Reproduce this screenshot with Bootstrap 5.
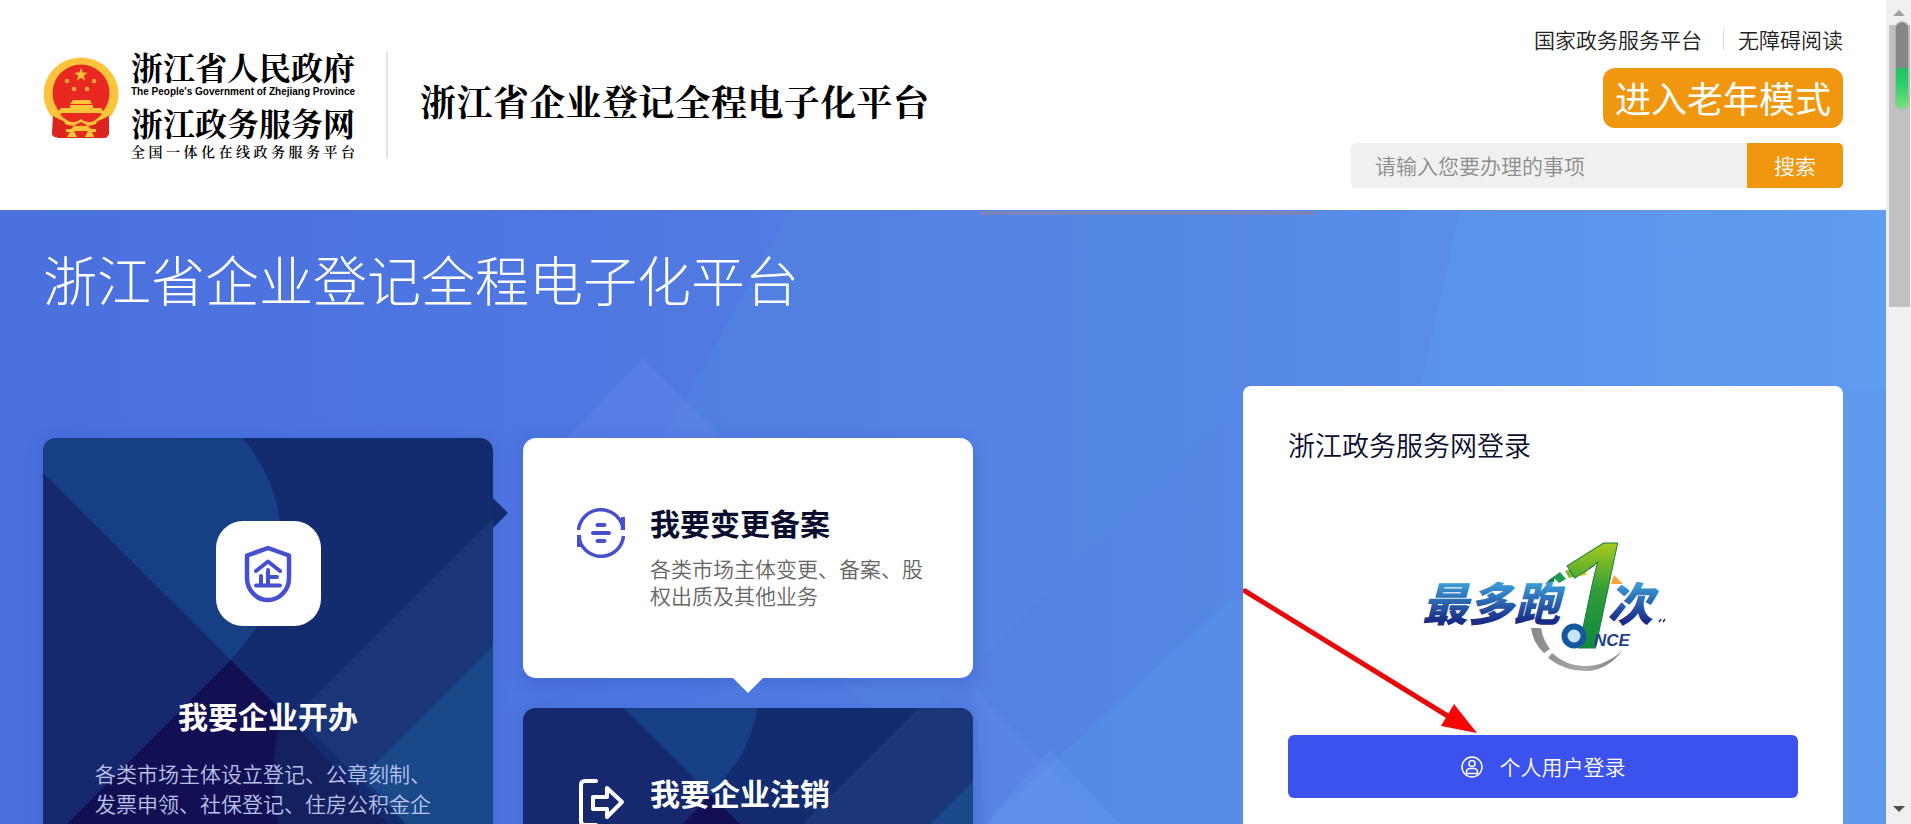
<!DOCTYPE html>
<html lang="zh-CN">
<head>
<meta charset="utf-8">
<meta name="viewport" content="width=device-width, initial-scale=1">
<title>浙江省企业登记全程电子化平台</title>
<link href="https://cdn.jsdelivr.net/npm/bootstrap@5.3.0/dist/css/bootstrap.min.css" rel="stylesheet">
<style>
  :root { --edge: 43px; --orange: #f0970f; --ink: #0a0d2e; }
  body { font-family: "Noto Sans CJK SC", sans-serif; font-weight: 350; font-size: 21px; line-height: 30px; color: #333; }
  .shell { min-width: 0; }

  /* header */
  .site-header { padding: 24px var(--edge) 22px; background: #fff; }
  .brand { padding-bottom: 2px; }
  .brand-words { width: 224px; margin: 0 0 2px 12px; color: #000; font-family: "Noto Serif CJK SC", "Noto Sans CJK SC", serif; font-weight: 700; text-align-last: justify; white-space: nowrap; }
  .brand-big { font-size: 32px; line-height: 36px; }
  .brand-en { font: 700 10px/12px "Liberation Sans", sans-serif; margin: 2px 0 6px; }
  .brand-sub { font-size: 14px; line-height: 18px; margin-top: 2px; font-weight: 600; }
  .brand-rule { width: 2px; height: 106px; background: #e4e4e4; margin: 0 32px 0 31px; }
  .brand-title { width: 509px; text-align-last: justify; font-family: "Noto Serif CJK SC", "Noto Sans CJK SC", serif; font-weight: 700; font-size: 36px; line-height: 40px; color: #000; white-space: nowrap; margin-bottom: 8px; }
  .top-links { line-height: 30px; }
  .top-links a { color: #222; text-decoration: none; }
  .top-links .bar { width: 1px; height: 21px; background: #ddd; margin: 0 14px 0 21px; }
  .btn-elder { background: var(--orange); color: #fff; font-size: 36px; font-weight: 400; line-height: 58px; height: 60px; padding: 0 12px 2px; border: 0; border-radius: 12px; margin: 14px 0 15px; }
  .search-form { width: 492px; }
  .search-form .form-control { background: #f0f0f0; border: 0; border-radius: 5px 0 0 5px; font-size: 21px; line-height: 45px; height: 45px; padding: 0 24px; font-weight: 350; }
  .search-form .form-control::placeholder { color: #8c8c8c; }
  .search-form .btn { width: 96px; background: var(--orange); color: #fff; border: 0; border-radius: 0 5px 5px 0; font-size: 21px; padding: 0; font-weight: 350; }

  /* hero */
  .hero { padding: 0 var(--edge); background: linear-gradient(90deg, #4a70dd 0%, #4f78e1 33%, #5686e5 62%, #609aee 100%); }
  .hero-art { inset: 0; width: 100%; height: 100%; }
  .hero-left { max-width: 930px; padding-top: 29px; }
  .hero-left h1 { font-size: 54px; line-height: 80px; font-weight: 300; color: #fff; margin: 0 0 119px; white-space: nowrap; }
  .tiles { display: grid; grid-template-columns: 1fr 1fr; gap: 30px; }
  .tile { border-radius: 13px; text-decoration: none; box-shadow: 0 4px 18px #2846b455; }
  .tile-art { inset: 0; width: 100%; height: 100%; border-radius: 13px; }
  .tile-tall { grid-row: span 2; padding: 83px 52px 40px; color: #b9c2ea; min-height: 510px; }
  .tile-wide { height: 240px; padding: 68px 36px 0 53px; gap: 24px; }
  .tile-wide .glyph { margin-top: 2px; }
  .tile h2 { font-size: 30px; line-height: 32px; font-weight: 700; margin: 0; }
  .tile-white { background: #fff; color: #666; }
  .tile-white h2 { color: var(--ink); }
  .tile-wide p { line-height: 27px; margin: 17px 0 0; }
  .tile-dark { color: #b9c2ea; }
  .tile-dark h2 { color: #fff; }
  .icon-box { width: 105px; height: 105px; border-radius: 27px; background: #fff; }
  .tile.tile-tall h2 { margin: 73px 0 27px; }
  .tip-right { left: 100%; top: 60px; width: 15px; height: 30px; background: #132a6e; clip-path: polygon(0 0, 100% 50%, 0 100%); }
  .tip-down { top: 100%; left: calc(50% - 15px); width: 30px; height: 15px; background: #fff; clip-path: polygon(0 0, 100% 0, 50% 100%); }

  /* login */
  .login-card { margin-top: 176px; background: #fff; border-radius: 8px; padding: 39px 45px; min-height: 560px; }
  .login-card h2 { font-size: 27px; line-height: 40px; font-weight: 350; color: var(--ink); margin: 0 0 54px; }
  .login-mark { margin: 0 0 46px; }
  .btn-login { background: #3c52ee; color: #fff; height: 63px; border: 0; border-radius: 6px; font-size: 21px; font-weight: 350; gap: 17px; }
  .btn-elder:hover, .search-form .btn:hover { background: #d9860a; color: #fff; }
  .btn-login:hover { background: #2f44d8; color: #fff; }
  .pointer { left: 0; top: 200px; }

  /* scroll rail */
  .rail { width: 25px; background: #f0f0f0; padding: 10px 2px 12px 3px; }
  .rail-thumb { height: 282px; width: 21px; background: #c1c1c1; margin-top: 9px; }
  .rail-gauge { left: 7px; top: -3px; width: 12px; height: 87px; border-radius: 6px; background: linear-gradient(#868686 0 46px, #1fc463 46px, #2fd06c 64px, #7be27a 100%); box-shadow: 0 0 3px #999; }
</style>
</head>
<body class="vh-100 overflow-hidden d-flex">

<svg width="0" height="0" class="position-absolute" aria-hidden="true">
  <symbol id="facets" viewBox="0 0 450 560" preserveAspectRatio="xMidYMin slice">
    <rect width="450" height="560" fill="#132b6f"/>
    <path d="M0 35 188 222 0 410z" fill="#17296e"/>
    <path d="M0 0H200Q236 45 238 95 238 150 215 188L188 222 0 35z" fill="#173f84"/>
    <path d="M450 80 252 278 345 370 450 265z" fill="#1b3678"/>
    <path d="M188 222 240 274Q225 320 235 386L200 560H0V410z" fill="#120f52"/>
    <path d="M240 274 345 386 200 560 235 386Q225 320 240 274z" fill="#15205f"/>
    <path d="M450 208 320 338 375 400 300 560H450z" fill="#1a498a"/>
  </symbol>
</svg>

<div class="shell flex-fill d-flex flex-column">
  <header class="site-header d-flex justify-content-between">
    <div class="brand d-flex align-items-center">
      <svg width="76" height="106" viewBox="7 2 76 106" role="img" aria-label="国徽">
        <path d="M18 63 16 85 22 88H70L73 84 71 62z" fill="#e02a20"/>
        <ellipse cx="45" cy="44" rx="37.500" ry="36.500" fill="#fbc43b"/>
        <circle cx="45" cy="43" r="28.500" fill="#e7291f"/>
        <path d="M45 18l1.700 4.600 4.800.2-3.800 3 1.400 4.700-4.100-2.700-4.100 2.700 1.400-4.700-3.800-3 4.800-.2z" fill="#fbc43b"/>
        <g fill="#f9a13b"><circle cx="31" cy="31" r="2.300"/><circle cx="58" cy="31" r="2.300"/><circle cx="38" cy="39" r="2.300"/><circle cx="51" cy="39" r="2.300"/></g>
        <path d="M37 50H54L56 54H34zM34 55H57V58H65L68 63H21L25 58H34z" fill="#fbc43b"/>
        <path d="M17 66 29 72 38 76 34 80H29V87H18L16 84zM73 66 60 72 52 76 56 80H61V87H71L73 84z" fill="#dc241d"/>
        <path d="M24 64H66L58 72 50 76H40L31 72z" fill="#e7291f"/>
        <path d="M28 68Q37 76 45 69 53 76 62 68L60 74Q52 77 49 74L45 72 41 74Q37 77 29 74z" fill="#fbc43b"/>
        <path d="M30 79H39Q45 72 51 79H60V82H56L58 87H49L52 81H38L41 87H31L34 82H30z" fill="#fbc43b"/>
      </svg>
      <div class="brand-words">
        <div class="brand-big">浙江省人民政府</div>
        <div class="brand-en">The People's Government of Zhejiang Province</div>
        <div class="brand-big">浙江政务服务网</div>
        <div class="brand-sub">全国一体化在线政务服务平台</div>
      </div>
      <div class="brand-rule"></div>
      <div class="brand-title">浙江省企业登记全程电子化平台</div>
    </div>
    <div class="d-flex flex-column align-items-end">
      <nav class="top-links d-flex align-items-center">
        <a href="#">国家政务服务平台</a><span class="bar"></span><a href="#">无障碍阅读</a>
      </nav>
      <button type="button" class="btn-elder">进入老年模式</button>
      <form class="search-form input-group" role="search">
        <input type="search" class="form-control" placeholder="请输入您要办理的事项" aria-label="请输入您要办理的事项">
        <button type="button" class="btn">搜索</button>
      </form>
    </div>
  </header>

  <main class="hero flex-fill position-relative overflow-hidden d-flex justify-content-between align-items-start">
    <svg class="hero-art position-absolute" viewBox="0 0 1886 614" preserveAspectRatio="none" aria-hidden="true">
      <path d="M790 0 640 270 900 530 1230 200 1230 0z" fill="#5590e4" opacity=".2"/>
      <path d="M643 148 560 235H730z" fill="#6a8cf0" opacity=".3"/>
      <path d="M1230 390 985 614H1243V390z" fill="#5a9ae8" opacity=".28"/>
      <path d="M975 480 1105 614H985z" fill="#6b98f4" opacity=".2"/>
      <path d="M1050 540 1120 614H985z" fill="#6b98f4" opacity=".3"/>
      <path d="M1460 0 1420 180H1886V0z" fill="#64a6f2" opacity=".18"/>
      <rect x="980" y="1" width="335" height="4" fill="#7a83bd"/>
    </svg>

    <section class="hero-left position-relative flex-fill">
      <h1>浙江省企业登记全程电子化平台</h1>
      <div class="tiles">
        <a href="#" class="tile tile-tall tile-dark position-relative d-flex flex-column align-items-center">
          <svg class="tile-art position-absolute" viewBox="0 0 450 510" preserveAspectRatio="xMidYMin slice" aria-hidden="true"><use href="#facets" width="450" height="560"/></svg>
          <span class="tip-right position-absolute"></span>
          <span class="icon-box position-relative d-flex align-items-center justify-content-center">
            <svg width="48" height="58" viewBox="0 0 48 58" fill="none" stroke="#464fd0" stroke-linecap="round" stroke-linejoin="round" aria-hidden="true">
              <path d="M24 3 3 10.500V33a21 22 0 0 0 42 0V10.500z" stroke-width="4.500"/>
              <path d="M12 26 24 16.500 36 26M24 25V40M24 32H33M17 31V40M12 40.500H36" stroke-width="4"/>
            </svg>
          </span>
          <h2 class="position-relative">我要企业开办</h2>
          <p class="position-relative m-0">各类市场主体设立登记、公章刻制、发票申领、社保登记、住房公积金企业缴存登记、银行预约开户等</p>
        </a>

        <a href="#" class="tile tile-wide tile-white position-relative d-flex align-items-start">
          <svg class="glyph flex-shrink-0" width="50" height="50" viewBox="0 0 50 50" fill="none" stroke="#4650cc" stroke-width="3.500" aria-hidden="true">
            <path d="M2.500 22A22.500 22.500 0 0 1 46.500 18V22"/>
            <path d="M47.500 28A22.500 22.500 0 0 1 3.500 32V28"/>
            <path d="M45 9H49V22H45zM5 39H1V27H5z" fill="#4650cc" stroke="none"/>
            <path d="M21.500 17H28.500M17 25H33M21.500 33H28.500" stroke-width="4" stroke-linecap="round"/>
          </svg>
          <div>
            <h2>我要变更备案</h2>
            <p>各类市场主体变更、备案、股权出质及其他业务</p>
          </div>
          <span class="tip-down position-absolute"></span>
        </a>

        <a href="#" class="tile tile-wide tile-dark position-relative d-flex align-items-start">
          <svg class="tile-art position-absolute" viewBox="0 135 450 240" preserveAspectRatio="xMidYMin slice" aria-hidden="true"><use href="#facets" width="450" height="560"/></svg>
          <svg class="glyph position-relative flex-shrink-0" width="50" height="50" viewBox="0 0 50 50" fill="none" stroke="#fff" stroke-width="4" stroke-linecap="round" stroke-linejoin="round" aria-hidden="true">
            <path d="M20 3H9Q5 3 5 7V43Q5 47 9 47H20"/>
            <path d="M17 19H31V10L46 24 31 39V31H17z"/>
          </svg>
          <div class="position-relative">
            <h2>我要企业注销</h2>
            <p>企业注销登记</p>
          </div>
        </a>
      </div>
    </section>

    <section class="login-card col-4 position-relative">
      <h2>浙江政务服务网登录</h2>
      <div class="login-mark text-center">
        <svg width="286" height="170" viewBox="0 0 286 170" role="img" aria-label="最多跑1次 ONCE">
          <defs>
            <linearGradient id="blue" x1="0" y1="0" x2="0" y2="1"><stop offset=".25" stop-color="#3a9ad6"/><stop offset=".8" stop-color="#1a2d86"/></linearGradient>
            <linearGradient id="green" x1="0" y1="0" x2="0" y2="1"><stop offset=".25" stop-color="#a9cc1c"/><stop offset=".5" stop-color="#2f9c3a"/><stop offset=".85" stop-color="#08833f"/></linearGradient>
            <linearGradient id="grey" x1="0" y1="0" x2="1" y2="0"><stop offset="0" stop-color="#888"/><stop offset=".6" stop-color="#aaa"/><stop offset="1" stop-color="#777"/></linearGradient>
          </defs>
          <path d="M131 109H141Q143 121 150 130L144 134Q133 124 131 109zM152 134Q168 148 186 147 205 147 222 132 208 150 189 152 166 153 148 139z" fill="url(#grey)"/>
          <path d="M150 60 155 57 154 63 145 65z" fill="#0f7f4a"/>
          <path d="M153 58 160 53 166 60 159 64z" fill="#1e9a4c"/>
          <path d="M165 52 175 49 177 57 169 59z" fill="#7fb82e"/>
          <path d="M179 49 188 48 186 56 180 57z" fill="#d0cf2a"/>
          <path d="M214 56 223 65H211z" fill="#f5a63a"/>
          <g font-family="Noto Sans CJK SC, sans-serif" font-weight="900" font-style="italic" font-size="46" fill="url(#blue)">
            <text x="22" y="102">最多跑</text>
            <text x="207" y="102">次</text>
          </g>
          <path d="M259 103 261 100M263 103 265 100" stroke="#1a2d86" stroke-width="1.500"/>
          <text x="150" y="129" font-family="Open Sans, sans-serif" font-weight="600" font-style="italic" font-size="146" fill="url(#green)" stroke="#19803c" stroke-width="1">1</text>
          <circle cx="174" cy="117" r="9.500" fill="#c9e4f6" stroke="#15589f" stroke-width="6"/>
          <text x="194" y="127" font-family="Liberation Sans, sans-serif" font-weight="700" font-style="italic" font-size="17" fill="#24418c">NCE</text>
        </svg>
      </div>
      <button type="button" class="btn btn-login w-100 d-flex align-items-center justify-content-center">
        <svg width="22" height="22" viewBox="0 0 22 22" fill="none" stroke="#fff" stroke-width="1.500" aria-hidden="true">
          <circle cx="11" cy="11" r="10"/><circle cx="11" cy="7.500" r="3"/><path d="M5.500 17.500V15.500Q6 12.500 9 12.500H13Q16 12.500 16.500 15.500V17.500z"/>
        </svg>
        个人用户登录
      </button>
      <svg class="pointer position-absolute" width="240" height="152" viewBox="0 0 240 152" aria-hidden="true">
        <path d="M2 5 208 132" stroke="#e80a0a" stroke-width="5" stroke-linecap="round"/>
        <path d="M234 147 198 140 211 118z" fill="#f70505"/>
      </svg>
    </section>
  </main>
</div>

<aside class="rail flex-shrink-0 d-flex flex-column align-items-center" aria-hidden="true">
  <svg width="12" height="6" viewBox="0 0 12 6"><path d="M0 6 6 0 12 6z" fill="#a0a0a0"/></svg>
  <div class="rail-thumb position-relative"><div class="rail-gauge position-absolute"></div></div>
  <svg class="mt-auto" width="12" height="6" viewBox="0 0 12 6"><path d="M0 0H12L6 6z" fill="#505050"/></svg>
</aside>

<script src="https://cdn.jsdelivr.net/npm/bootstrap@5.3.0/dist/js/bootstrap.bundle.min.js"></script>
</body>
</html>
